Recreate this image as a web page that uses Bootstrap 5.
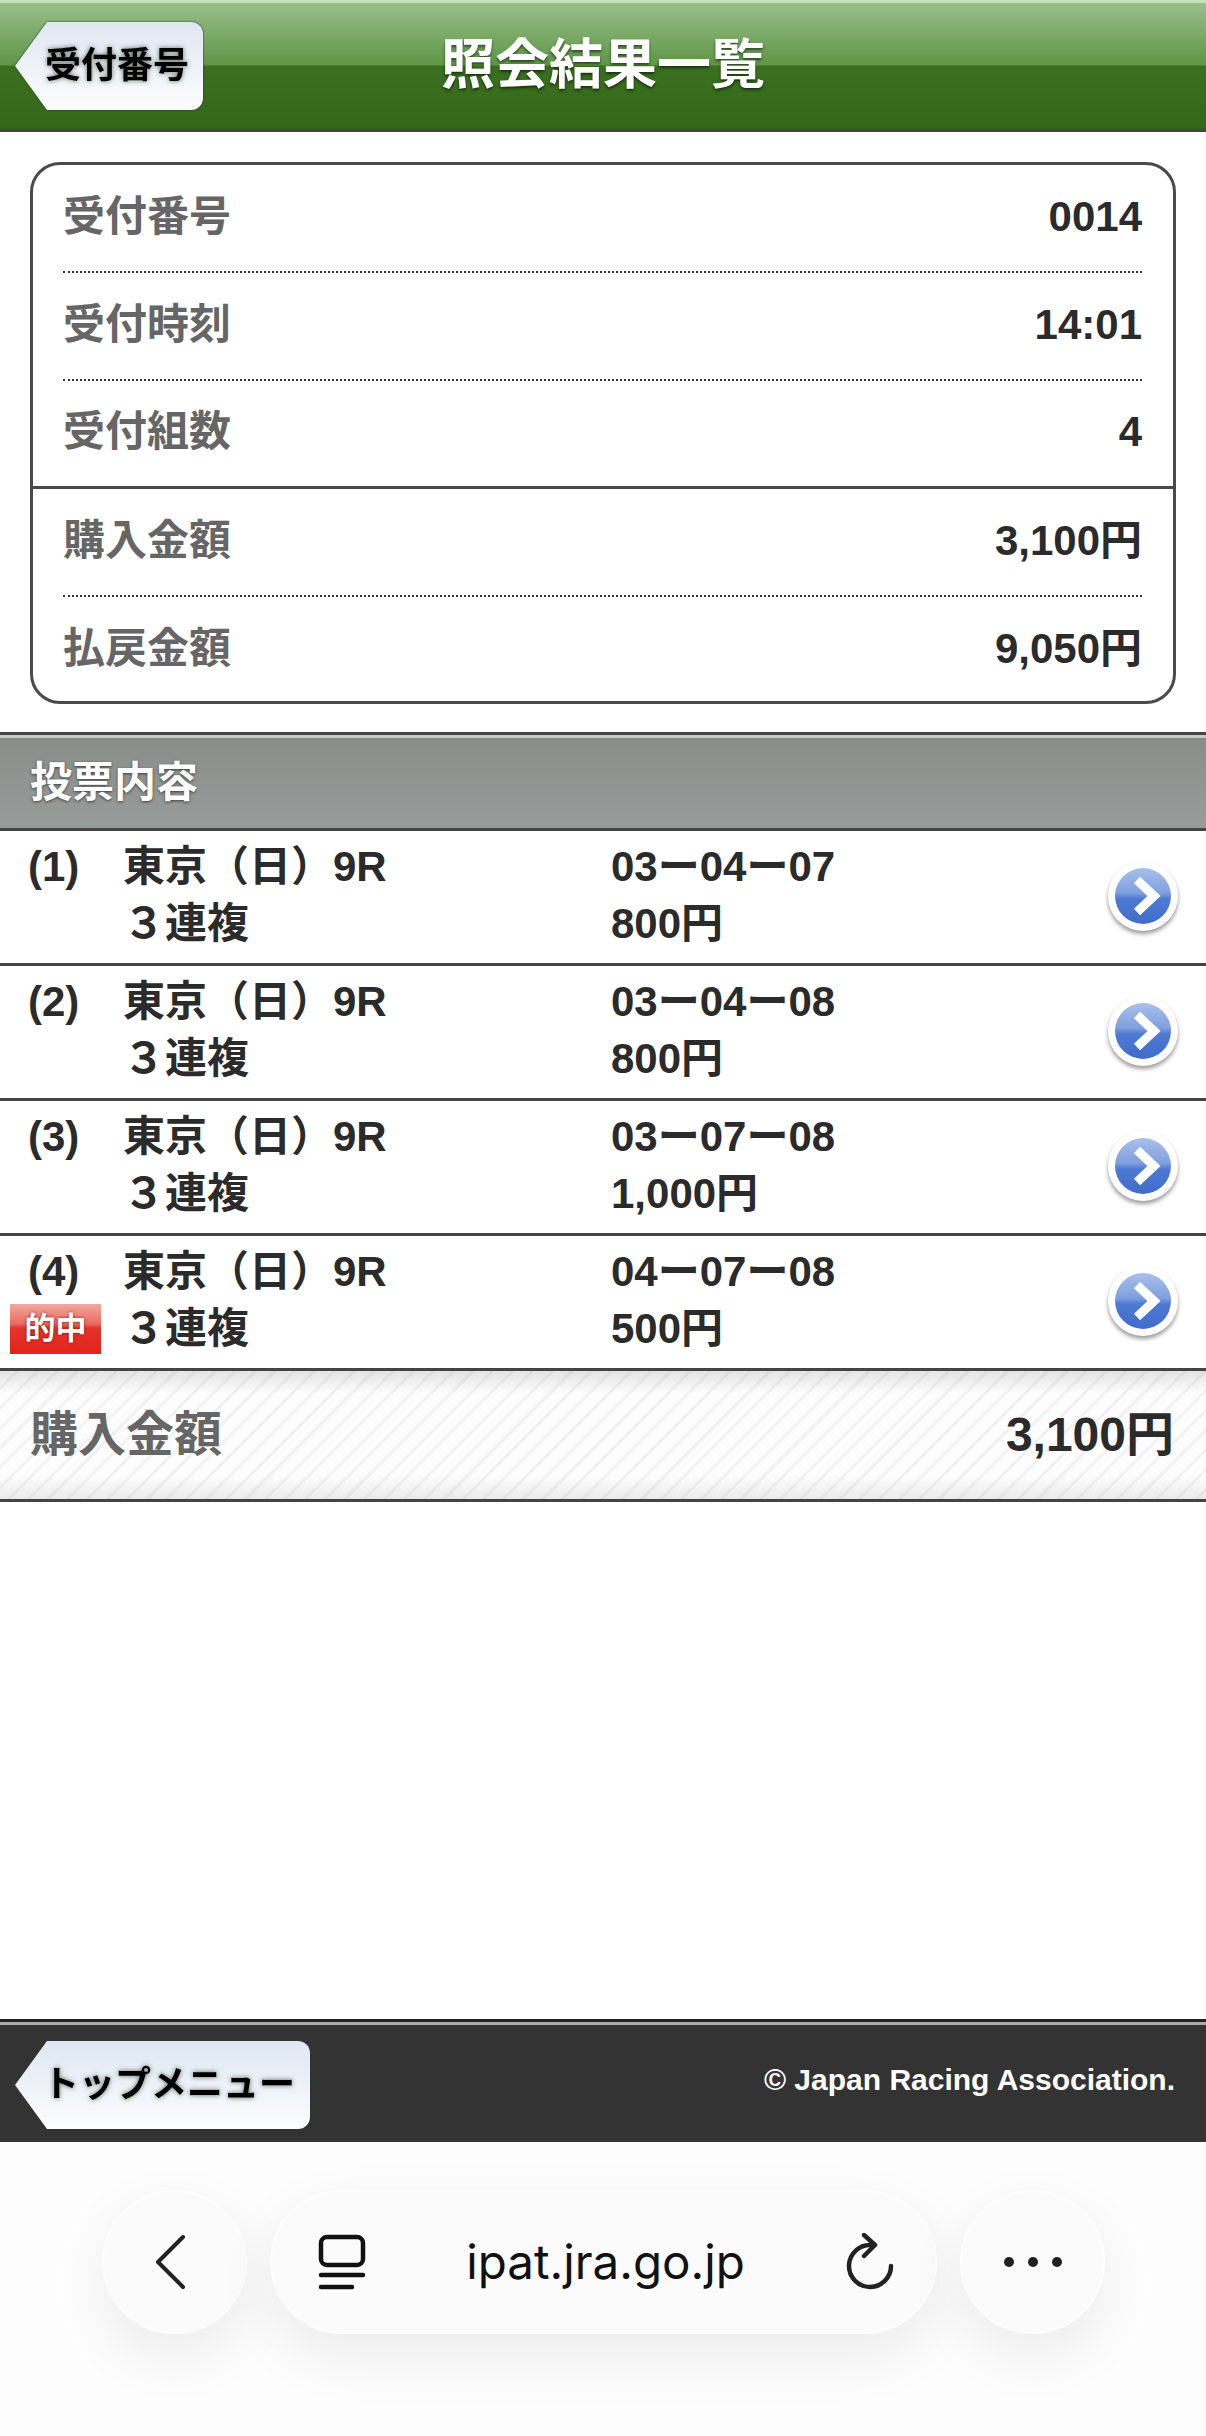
<!DOCTYPE html>
<html lang="ja">
<head>
  <meta charset="UTF-8" />
  <meta name="viewport" content="width=device-width, initial-scale=1.0" />
  <title>照会結果一覧</title>
  <link href="https://cdn.jsdelivr.net/npm/bootstrap@5.3.3/dist/css/bootstrap.min.css" rel="stylesheet">
  <style>
    body {
      font-family: "Liberation Sans", "Noto Sans CJK JP", sans-serif;
      font-weight: 700;
      color: #2b2b2b;
      background: #fff;
    }
    .page-wrap { width: 1206px; height: 2436px; }

    /* header */
    .top-bar {
      height: 132px;
      border-top: 3px solid #c8e0ba;
      border-bottom: 3px solid #444;
      background: linear-gradient(#9abf8b 0, #5e9646 62px, #3a701f 63px, #346819 100%);
    }
    .top-title {
      left: 0; right: 0; top: 32px;
      text-align: center;
      font-size: 54px;
      line-height: 60px;
      color: #fff;
      text-shadow: 0 2px 3px rgba(0,0,0,.55);
    }
    .tag-wrap { filter: drop-shadow(0 0 1px #333); }
    .tag-btn {
      height: 88px;
      font-size: 36px;
      color: #000;
      text-shadow: 0 0 5px rgba(40,60,40,.75);
      background: linear-gradient(#dfe7f2, #fcfdff);
      border-radius: 0 12px 12px 0;
      clip-path: polygon(32px 0, 100% 0, 100% 100%, 32px 100%, 0 50%);
    }
    .tag-back { width: 188px; margin: 19px 0 0 15px; padding-left: 30px; }
    .tag-top { width: 295px; padding-left: 28px; }

    /* info box */
    .info-box {
      margin: 30px 30px 28px;
      height: 542px;
      border: 3px solid #4a4a4a;
      border-radius: 30px;
    }
    .info-row {
      height: 108px;
      margin: 0 31px 0 30px;
      padding-bottom: 4px;
      font-size: 42px;
      border-bottom: 2px dotted #333;
    }
    .info-row.row-solid { margin: 0; padding: 0 31px 4px 30px; border-bottom: 3px solid #4a4a4a; }
    .info-row.row-end { border-bottom: 0; height: 105px; padding-bottom: 2px; }
    .info-label { color: #666; }

    /* section */
    .sect-head {
      height: 99px;
      padding: 2px 0 0 30px;
      font-size: 42px;
      color: #fff;
      text-shadow: 0 1px 3px rgba(0,0,0,.6);
      border-top: 3px solid #444;
      border-bottom: 3px solid #444;
      background: linear-gradient(#c9cdc9 0, #c9cdc9 3px, #888d8a 3px, #989d9b 100%);
    }
    .bet-row {
      height: 135px;
      padding-top: 7px;
      font-size: 42px;
      line-height: 57px;
      border-bottom: 3px solid #444;
    }
    .bet-no { width: 123px; }
    .bet-no-txt { padding-left: 28px; }
    .bet-race { width: 488px; }
    .hit-mark {
      width: 91px;
      height: 50px;
      margin: 4px 0 0 10px;
      font-size: 31px;
      line-height: 50px;
      text-align: center;
      color: #fff;
      text-shadow: 0 0 3px rgba(90,0,0,.8);
      background: linear-gradient(#f3a8a0 0, #ea6a5e 20px, #e5332a 24px, #e2241c 100%);
    }
    .go-btn {
      width: 70px;
      height: 70px;
      margin: 23px 28px 0 auto;
      filter: drop-shadow(0 3px 2px rgba(0,0,0,.4));
    }

    /* total */
    .total-bar {
      height: 131px;
      padding: 0 32px 0 30px;
      font-size: 48px;
      border-bottom: 3px solid #444;
      background:
        linear-gradient(rgba(0,0,0,.1), rgba(255,255,255,0) 22px, rgba(255,255,255,0) 105px, rgba(0,0,0,.07)),
        repeating-linear-gradient(135deg, #fdfdfd 0, #fdfdfd 11px, #f2f2f2 11px, #f2f2f2 14px);
    }
    .total-label { color: #666; }

    /* footer */
    .foot-bar {
      height: 123px;
      padding: 19px 31px 0 15px;
      color: #fff;
      border-top: 3px solid #222;
      background: linear-gradient(#aaa 0, #aaa 3px, #333 3px);
    }
    .foot-copy { font-size: 30px; padding-top: 16px; }

    /* browser bar */
    .browser-bar {
      height: 294px;
      padding: 48px 101px 0 102px;
      background: #fdfdfd;
      font-weight: 400;
    }
    .pill {
      height: 144px;
      background: #fbfbfb;
      border: 2px solid #fdfdfd;
      border-radius: 72px;
      box-shadow: 0 22px 60px rgba(0,0,0,.07);
    }
    .pill-round { width: 145px; }
    .pill-url { width: 667px; padding: 0 40px 0 46px; }
    .back-ico { margin-right: 10px; }
    .url-txt { font-family: Inter, "Liberation Sans", sans-serif; font-size: 47.5px; color: #111; }
  </style>
</head>
<body>
  <div class="page-wrap d-flex flex-column">

    <!-- Header -->
    <header class="top-bar position-relative">
      <div class="tag-wrap d-inline-block">
        <div class="tag-btn tag-back d-flex align-items-center">受付番号</div>
      </div>
      <div class="top-title position-absolute">照会結果一覧</div>
    </header>

    <!-- Receipt info -->
    <div class="info-box">
      <div class="info-row d-flex justify-content-between align-items-center"><span class="info-label">受付番号</span><span>0014</span></div>
      <div class="info-row d-flex justify-content-between align-items-center"><span class="info-label">受付時刻</span><span>14:01</span></div>
      <div class="info-row row-solid d-flex justify-content-between align-items-center"><span class="info-label">受付組数</span><span>4</span></div>
      <div class="info-row d-flex justify-content-between align-items-center"><span class="info-label">購入金額</span><span>3,100円</span></div>
      <div class="info-row row-end d-flex justify-content-between align-items-center"><span class="info-label">払戻金額</span><span>9,050円</span></div>
    </div>

    <!-- Bets -->
    <div class="sect-head d-flex align-items-center">投票内容</div>
    <div id="bets"></div>

    <div class="total-bar d-flex justify-content-between align-items-center">
      <span class="total-label">購入金額</span><span>3,100円</span>
    </div>

    <div class="flex-grow-1"></div>

    <!-- Footer -->
    <footer class="foot-bar d-flex justify-content-between">
      <div class="tag-wrap align-self-start">
        <div class="tag-btn tag-top d-flex align-items-center">トップメニュー</div>
      </div>
      <div class="foot-copy">© Japan Racing Association.</div>
    </footer>

    <!-- Browser toolbar -->
    <div class="browser-bar d-flex justify-content-between">
      <div class="pill pill-round d-flex align-items-center justify-content-center">
        <svg class="back-ico" width="36" height="56" viewBox="0 0 36 56" fill="none" stroke="#222" stroke-width="4" stroke-linecap="round" stroke-linejoin="round"><path d="M31 3 L6 28 L31 53"/></svg>
      </div>
      <div class="pill pill-url d-flex align-items-center justify-content-between">
        <svg width="48" height="56" viewBox="0 0 48 56" fill="none" stroke="#111" stroke-width="4.5" stroke-linecap="round"><rect x="3" y="3" width="42" height="28" rx="6"/><path d="M3 41 H45"/><path d="M3 53 H34"/></svg>
        <span class="url-txt">ipat.jra.go.jp</span>
        <svg width="50" height="58" viewBox="0 0 50 58" fill="none" stroke="#222" stroke-width="4.5" stroke-linecap="round" stroke-linejoin="round"><path d="M26 12 A21 21 0 1 0 46 33"/><path d="M19 2 L30 12 L19 23"/></svg>
      </div>
      <div class="pill pill-round d-flex align-items-center justify-content-center">
        <svg width="60" height="12" viewBox="0 0 60 12" fill="#222"><circle cx="6" cy="6" r="5"/><circle cx="30" cy="6" r="5"/><circle cx="54" cy="6" r="5"/></svg>
      </div>
    </div>
  </div>

  <script>
    // 投票内容の行を作る
    const bets = [
      { no: '(1)', nums: '03ー04ー07', yen: '800円' },
      { no: '(2)', nums: '03ー04ー08', yen: '800円' },
      { no: '(3)', nums: '03ー07ー08', yen: '1,000円' },
      { no: '(4)', nums: '04ー07ー08', yen: '500円', hit: true }
    ];
    const arrow = `<svg class="go-btn" viewBox="0 0 70 70">
      <defs><linearGradient id="gb" x1="0" y1="0" x2="0" y2="1">
        <stop offset="0" stop-color="#a9c0ea"/><stop offset=".45" stop-color="#7f9fdf"/>
        <stop offset=".55" stop-color="#4f7ad2"/><stop offset="1" stop-color="#3f6ccb"/>
      </linearGradient></defs>
      <circle cx="35" cy="35" r="35" fill="#fff"/><circle cx="35" cy="35" r="28" fill="url(#gb)"/>
      <path d="M29 19 L46 35 L29 51" fill="none" stroke="#fff" stroke-width="9"/></svg>`;
    document.getElementById('bets').innerHTML = bets.map(b => `
      <div class="bet-row d-flex">
        <div class="bet-no">
          <div class="bet-no-txt">${b.no}</div>
          ${b.hit ? '<div class="hit-mark">的中</div>' : ''}
        </div>
        <div class="bet-race"><div>東京（日）9R</div><div>３連複</div></div>
        <div><div>${b.nums}</div><div>${b.yen}</div></div>
        ${arrow}
      </div>`).join('');
  </script>
  <script src="https://cdn.jsdelivr.net/npm/bootstrap@5.3.3/dist/js/bootstrap.bundle.min.js"></script>
</body>
</html>
